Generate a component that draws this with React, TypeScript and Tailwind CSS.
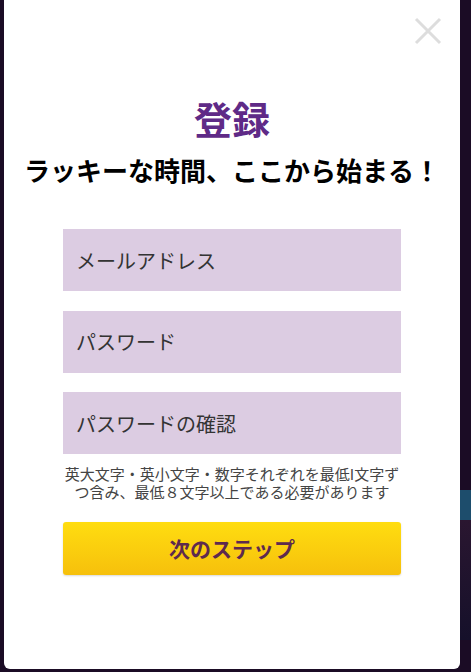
const fields = ['メールアドレス', 'パスワード', 'パスワードの確認'];

export default function App() {
  return (
    <div
      className="relative h-[672px] w-[471px] overflow-hidden bg-[#1b0c25]"
      style={{ fontFamily: '"Noto Sans CJK JP", "Noto Sans", sans-serif' }}
    >
      {/* background page peeking through on the right */}
      <div className="absolute right-0 top-[490px] h-[30px] w-[14px] bg-[#1d4d6c]" />
      <div className="absolute right-0 top-[520px] h-[120px] w-[14px] bg-gradient-to-b from-[#2a1630] to-[#15102a]" />

      <div className="relative ml-[4px] h-[669px] w-[456px] rounded-b-md bg-white">
        <button className="absolute right-[18px] top-[17px]">
          <svg width="28" height="28" viewBox="0 0 28 28" fill="none" stroke="#dddddd" strokeWidth="3">
            <path d="M2 2 L26 26 M26 2 L2 26" />
          </svg>
        </button>

        <div className="flex flex-col items-center pt-[96px]">
          <h1 className="text-[38px] font-bold leading-[44px] text-[#5f2a87]">登録</h1>
          <p className="mt-[14px] whitespace-nowrap text-[26px] font-bold leading-[32px] text-black">
            ラッキーな時間、ここから始まる！
          </p>

          <form className="mt-[43px] flex w-[338px] flex-col">
            <div className="flex flex-col gap-[19.5px]">
              {fields.map((f) => (
                <input
                  key={f}
                  placeholder={f}
                  className="h-[62px] w-full bg-[#dccce2] px-[13px] text-[20px] text-[#333] outline-none placeholder:text-[#333]"
                />
              ))}
            </div>
            <p className="mt-[11px] text-center text-[15px] leading-[18px] text-[#444]">
              英大文字・英小文字・数字それぞれを最低I文字ずつ含み、最低８文字以上である必要があります
            </p>
            <button
              type="button"
              className="mt-[21px] h-[53px] w-full rounded-[3px] bg-gradient-to-b from-[#ffdd10] to-[#f6c00c] text-[21px] font-bold text-[#5e2a4e] shadow-[0_1px_2px_rgba(0,0,0,0.15)]"
            >
              次のステップ
            </button>
          </form>
        </div>
      </div>
    </div>
  );
}
